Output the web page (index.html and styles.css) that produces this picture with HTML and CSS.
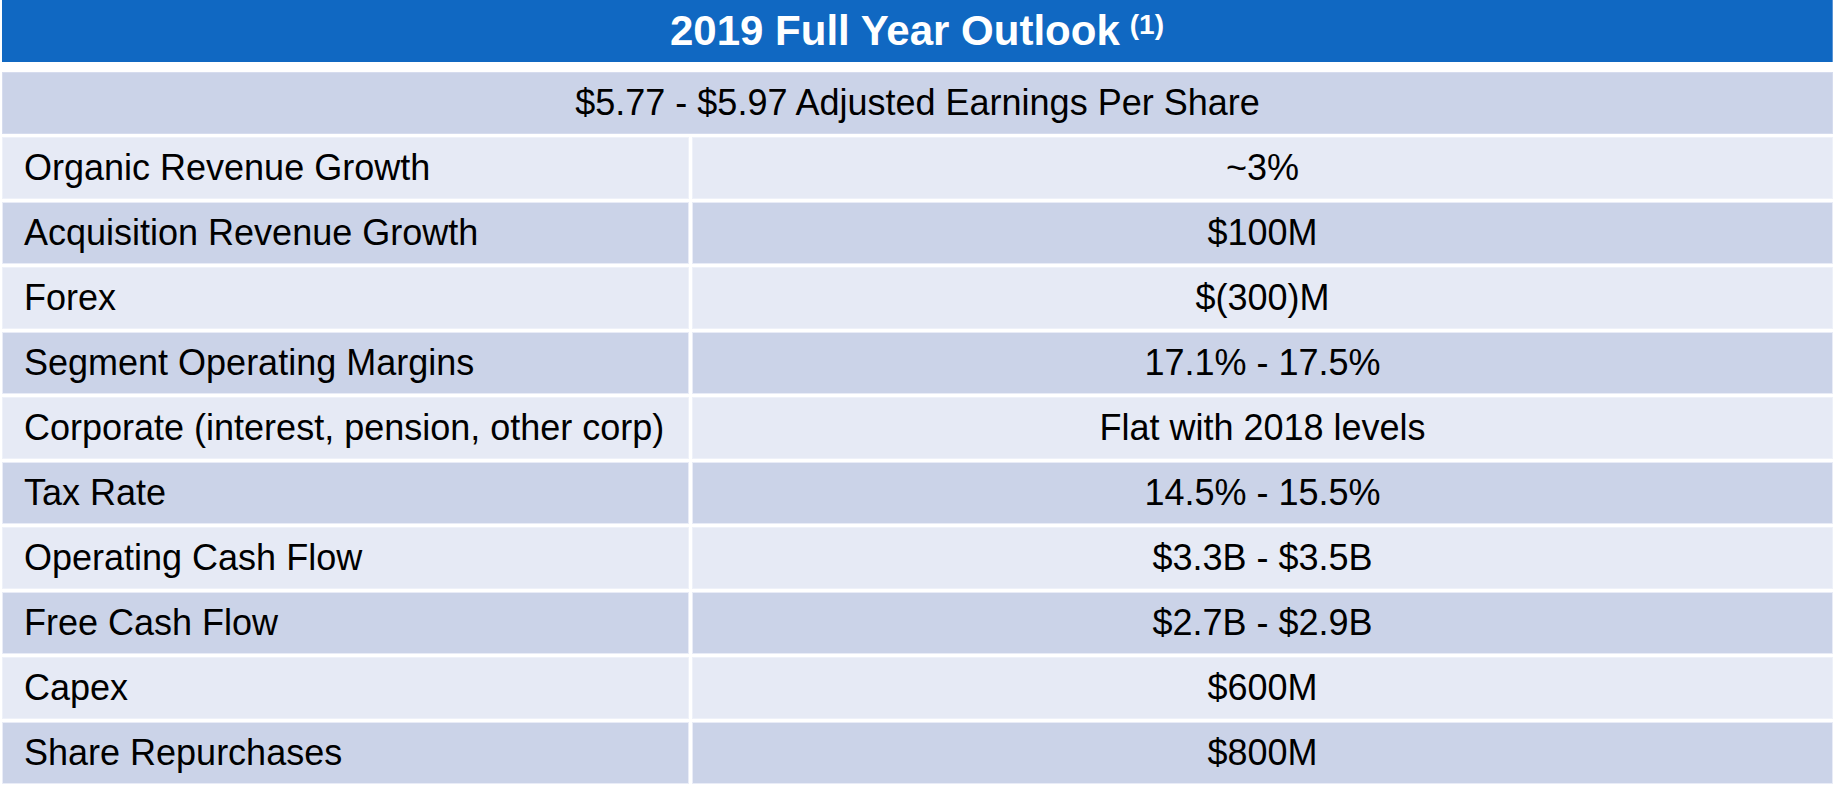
FILE: index.html
```html
<!DOCTYPE html>
<html>
<head>
<meta charset="utf-8">
<link rel="stylesheet" href="styles.css">
</head>
<body>
<div class="outlook">
  <div class="title">2019 Full Year Outlook <sup class="note">(1)</sup></div>
  <div class="eps">$5.77 - $5.97 Adjusted Earnings Per Share</div>
  <div class="grid">
    <div class="cell label light">Organic Revenue Growth</div><div class="cell value light">~3%</div>
    <div class="cell label dark">Acquisition Revenue Growth</div><div class="cell value dark">$100M</div>
    <div class="cell label light">Forex</div><div class="cell value light">$(300)M</div>
    <div class="cell label dark">Segment Operating Margins</div><div class="cell value dark">17.1% - 17.5%</div>
    <div class="cell label light">Corporate (interest, pension, other corp)</div><div class="cell value light">Flat with 2018 levels</div>
    <div class="cell label dark">Tax Rate</div><div class="cell value dark">14.5% - 15.5%</div>
    <div class="cell label light">Operating Cash Flow</div><div class="cell value light">$3.3B - $3.5B</div>
    <div class="cell label dark">Free Cash Flow</div><div class="cell value dark">$2.7B - $2.9B</div>
    <div class="cell label light">Capex</div><div class="cell value light">$600M</div>
    <div class="cell label dark">Share Repurchases</div><div class="cell value dark">$800M</div>
  </div>
</div>
</body>
</html>
```
FILE: styles.css
```css
html, body {
  margin: 0;
  padding: 0;
  background: #ffffff;
}
body {
  font-family: "Liberation Sans", Arial, sans-serif;
  color: #000000;
}
.outlook {
  width: 1831px;
  margin-left: 2px;
  display: flex;
  flex-direction: column;
}
.title {
  height: 62px;
  background: #1068c2;
  color: #ffffff;
  font-weight: bold;
  font-size: 42px;
  display: flex;
  align-items: center;
  justify-content: center;
  border-right: 1px solid #5a95d6;
}
.note {
  font-size: 28px;
  font-weight: bold;
  margin-left: 10px;
  align-self: flex-start;
  margin-top: 11px;
  line-height: 1;
}
.eps {
  margin-top: 10px;
  height: 62px;
  background: #cbd3e8;
  font-size: 36px;
  display: flex;
  align-items: center;
  justify-content: center;
  box-shadow: inset 0 0 0 1px #d6dcee;
}
.grid {
  margin-top: 3px;
  display: grid;
  grid-template-columns: 687px 1141px;
  grid-auto-rows: 62px;
  column-gap: 3px;
  row-gap: 3px;
}
.cell {
  font-size: 36px;
  display: flex;
  align-items: center;
  box-shadow: inset 0 0 0 1px rgba(240, 242, 250, 0.8);
}
.label {
  padding-left: 22px;
}
.value {
  justify-content: center;
}
.light {
  background: #e6eaf5;
}
.dark {
  background: #cbd3e8;
}
```
